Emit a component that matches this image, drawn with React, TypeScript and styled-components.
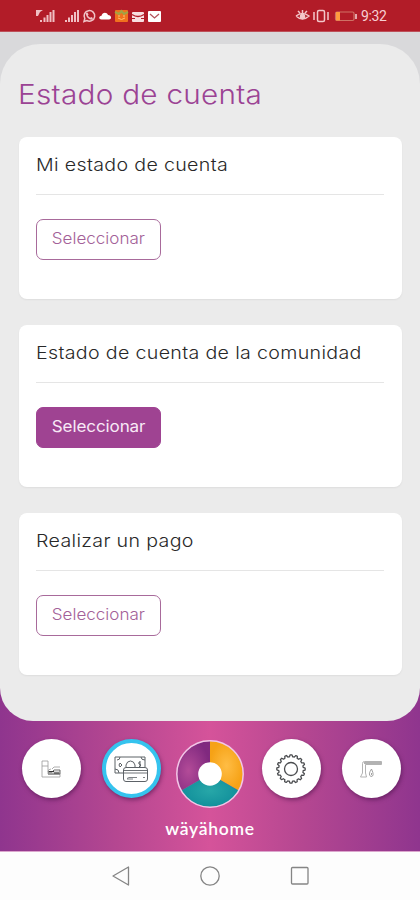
import React from "react";
import styled, { createGlobalStyle } from "styled-components";

const Global = createGlobalStyle`
  * { box-sizing: border-box; }
  body { margin: 0; background: #fdfdfd; font-family: Inter, "Open Sans", sans-serif; }
`;

const Screen = styled.div`
  width: 420px;
  height: 900px;
  display: flex;
  flex-direction: column;
  overflow: hidden;
`;

const StatusBar = styled.header`
  height: 32px;
  flex: none;
  display: flex;
  justify-content: space-between;
  background: #b21c28;
  border-bottom: 1px solid #bd5059;
  color: #f6d3d5;
`;

const Clock = styled.span`
  font: 400 14px/32px Roboto, sans-serif;
  letter-spacing: -0.4px;
  width: 59px;
  color: #f7cfd2;
`;

const StatusRight = styled.div`
  display: flex;
`;

const Stage = styled.main`
  height: 689px;
  flex: none;
  padding-top: 12px;
  background: linear-gradient(#d9d9db 0 300px, transparent 300px),
    linear-gradient(90deg, #8f358e 0%, #b54791 28%, #d5539a 50%, #b54791 72%, #8f358e 100%);
`;

const Panel = styled.section`
  height: 677px;
  padding: 34px 18px 0 19px;
  border-radius: 40px 40px 33px 33px;
  background: #ebebeb;
`;

const WideText = styled.span<{ $scale: number; $origin?: string }>`
  display: inline-block;
  transform: scaleX(${(p) => p.$scale});
  transform-origin: ${(p) => p.$origin ?? "left"};
`;

const Title = styled.h1`
  margin: 0 0 25px -1px;
  font-size: 27px;
  line-height: 34px;
  font-weight: 300;
  letter-spacing: 0.25px;
  white-space: nowrap;
  color: #9b4394;
`;

const CardList = styled.div`
  display: flex;
  flex-direction: column;
  gap: 26px;
`;

const Card = styled.article`
  height: 162px;
  padding: 15px 18px 0 17px;
  border-radius: 8px;
  background: #fff;
  box-shadow: 0 1px 2px rgba(0, 0, 0, 0.06);
`;

const CardTitle = styled.h2`
  margin: 0 0 24px;
  padding: 0 0 17px;
  border-bottom: 1px solid #e5e5e5;
  font-size: 17.5px;
  line-height: 25px;
  font-weight: 300;
  letter-spacing: 0.3px;
  white-space: nowrap;
  color: #282828;
`;

const SelectButton = styled.button<{ $filled?: boolean }>`
  display: block;
  width: 125px;
  height: 41px;
  padding: 0 0 2px;
  border: 1px solid ${(p) => (p.$filled ? "#9f4392" : "#a86a9b")};
  border-radius: 7px;
  background: ${(p) => (p.$filled ? "#9f4392" : "#fff")};
  color: ${(p) => (p.$filled ? "#f8e9f6" : "#a36198")};
  font: ${(p) => (p.$filled ? 400 : 300)} 15.5px Inter, sans-serif;
  letter-spacing: ${(p) => (p.$filled ? -0.1 : 0)}px;
`;

const BottomNav = styled.nav`
  height: 131px;
  flex: none;
  display: flex;
  flex-direction: column;
  align-items: center;
  padding-top: 18px;
  border-bottom: 1px solid #dba6cd;
  background: linear-gradient(90deg, #8f358e 0%, #b54791 28%, #d5539a 50%, #b54791 72%, #8f358e 100%);
`;

const NavRow = styled.div`
  height: 78px;
  display: grid;
  grid-template-columns: repeat(5, 80px);
  justify-items: center;
  align-items: start;
`;

const NavButton = styled.button<{ $active?: boolean }>`
  width: 59px;
  height: 59px;
  margin-left: 2px;
  padding: 0;
  border: ${(p) => (p.$active ? "4px solid #35c3ee" : "0")};
  border-radius: 50%;
  background: #fff;
  box-shadow: 1px 2px 4px rgba(70, 15, 70, 0.55);
  display: grid;
  place-items: center;
`;

const HomeButton = styled.button`
  padding: 0;
  border: 0;
  background: none;
  line-height: 0;
`;

const Brand = styled.div`
  font: 600 17.5px/24px Lato, sans-serif;
  letter-spacing: 0.7px;
  color: #fff;
`;

const SystemBar = styled.footer`
  height: 48px;
  display: grid;
  grid-template-columns: repeat(3, 90px);
  justify-content: center;
  justify-items: center;
  align-items: center;
  background: #fdfdfd;
`;

const LeftStatus = () => (
  <svg width="170" height="31" fill="#f0bfc3">
    <path d="M36 10h7l-3 2-2 4h-2z" />
    <path d="M40 20h2v2h-2zM43.5 17.500h2v4.500h-2zM46.500 15h2v7h-2zM49.500 12h2v10h-2zM52.500 10h2v12h-2z" />
    <path d="M65 20h2v2h-2zM68 17.500h2v4.500h-2zM71 15h2v7h-2zM74 12h2v10h-2zM77 10h2v12h-2z" />
    <path d="M84 21.500l.8-3a5.300 5.300 0 1 1 2 2z" fill="none" stroke="#f0c4c7" strokeWidth="1.500" />
    <path d="M86 13l1.500-.5 1 2-.7 1c.7 1.200 1.300 1.700 2.400 2.200l1-.7 1.700 1-.5 1.500c-3.300 1-7-3-6.400-6.500z" />
    <path d="M101.500 19.500c-3 0-3-3.500 0-3.700.8-3.800 5.400-3.900 6.500-.8 3.800.3 4 4.500 1 4.500z" fill="#fff" />
    <rect x="115" y="10" width="13" height="12" rx="1" fill="#f0711e" />
    <path d="M115 12l4 2 2.500-3 2.500 3 4-2" fill="none" stroke="#a2a344" strokeWidth="2" />
    <path d="M118 18q3.500 3 7 0M118 16h2m3 0h2" fill="none" stroke="#ffc36f" />
    <rect x="132" y="12" width="12" height="10" rx="1" fill="#f8dfe1" />
    <path d="M132 14.500q6 4 12 0" fill="none" stroke="#b21c28" strokeWidth="1.400" />
    <path d="M132 18.500h3m6 0h3" fill="none" stroke="#b21c28" />
    <rect x="148" y="11" width="13" height="11" rx="1" fill="#fff" />
    <path d="M150 14l4.500 4 4.500-4" fill="none" stroke="#b4535c" strokeWidth="1.300" />
  </svg>
);

const RightIcons = () => (
  <svg width="66" height="31" fill="none" stroke="#f3c7ca" strokeWidth="1.500">
    <path d="M1 16q6.500-5 13 0-6.500 6-13 0M3 11l2 2m2.500-3v3m4.500-2l-2 2" />
    <circle cx="7.500" cy="16.500" r="2" fill="#f3c7ca" />
    <rect x="22.500" y="10.500" width="7" height="11" rx="1.500" />
    <path d="M19 12v8m14-8v8" />
    <rect x="40.500" y="12" width="18.500" height="8.500" rx="1.500" stroke="#cf7165" strokeWidth="1.200" />
    <path d="M41 12h4v8.500h-4z" fill="#ff9b3e" stroke="none" />
    <path d="M61 14v5" stroke="#f5d6d8" />
  </svg>
);

const AmenitiesIcon = () => (
  <svg width="24" height="24" viewBox="0 0 24 24" fill="none" stroke="#999" strokeWidth=".8">
    <path d="M3 4h6v5H3zM3 9v11h18v-3H9V9M12 12q-3 0-3 3h12M13 12l2-2h6" />
    <path d="M9 15h4l2-2h6v4H9" stroke="#444" />
    <path d="M10 14.500h5M15 16h5" stroke="#333" strokeWidth="1.200" />
  </svg>
);

const PaymentIcon = () => (
  <svg width="36" height="32" viewBox="0 0 36 32" fill="none" stroke="#5d6267" strokeWidth="1">
    <path d="M10 20H2V4h30v10M4 7q3 0 3-3M28 4q0 3 4 3M2 16q4 0 4 4" />
    <path d="M13 14v-2q1-4 4.500-4t4.500 4v2M7 10l2 2-2 2-1-2zM27 9q-2 0-1 2l2 1-2 2m1-6v6" />
    <rect x="10.500" y="14.500" width="24" height="14" rx="2.500" fill="#fff" />
    <path d="M10.500 17.500h24M10.500 20h24" strokeWidth=".9" />
    <path d="M14 25.500l2-1h8m-10 1.500h6M30 24.500h2" strokeWidth=".8" />
  </svg>
);

const Wheel = () => (
  <svg width="70" height="70" viewBox="-35 -35 70 70">
    <defs>
      <radialGradient id="plum" cx="35%" cy="60%" r="65%">
        <stop stopColor="#b34b98" /><stop offset="1" stopColor="#80297f" />
      </radialGradient>
      <radialGradient id="amber"><stop stopColor="#ffbd45" /><stop offset="1" stopColor="#f6a216" /></radialGradient>
      <radialGradient id="teal"><stop stopColor="#27a7a8" /><stop offset="1" stopColor="#12909b" /></radialGradient>
    </defs>
    <path d="M0 0V-33A33 33 0 0 0-28.580 16.500z" fill="url(#plum)" />
    <path d="M0 0V-33A33 33 0 0 1 28.580 16.500z" fill="url(#amber)" />
    <path d="M0 0L28.580 16.500A33 33 0 0 1-28.580 16.500z" fill="url(#teal)" />
    <circle r="33.200" fill="none" stroke="#f2c6e7" strokeWidth="1.500" />
    <circle r="11.800" fill="#fff" />
  </svg>
);

const gearPath = Array.from({ length: 96 }, (_, i) => {
  const angle = (i / 96) * Math.PI * 2 - Math.PI / 2 - 0.06;
  const radius = i % 6 < 3 ? 14.2 : 12.3;
  return `${i ? "L" : "M"}${(16 + radius * Math.cos(angle)).toFixed(2)} ${(16 + radius * Math.sin(angle)).toFixed(2)}`;
}).join("") + "Z";

const GearIcon = () => (
  <svg width="32" height="32" fill="none" stroke="#4a4c4f" strokeWidth="1.300">
    <path d={gearPath} strokeLinejoin="round" />
    <circle cx="16" cy="16" r="6.500" />
  </svg>
);

const TapIcon = () => (
  <svg width="24" height="22" fill="none" stroke="#aaa" strokeWidth=".9">
    <path d="M3.500 15V5.500q0-2 2-2h17v3H6.500V15" />
    <path d="M5 5h17" strokeWidth="1.800" />
    <path d="M3.500 15l-2 4h6l-1-4" />
    <path d="M12.500 11q-4 6-.5 7.500 4 0 .5-7.500M12.500 15v2" stroke="#999" />
  </svg>
);

const SystemIcon = ({ kind }: { kind: "back" | "home" | "recent" }) => (
  <svg width="22" height="22" fill="none" stroke="#858585" strokeWidth="1.300">
    {kind === "back" && <path d="M19.500 2v18L4 11z" strokeLinejoin="round" />}
    {kind === "home" && <circle cx="11" cy="11" r="9.200" />}
    {kind === "recent" && <rect x="2.500" y="2.500" width="16.500" height="16.500" rx="1" />}
  </svg>
);

const cards = [
  { title: "Mi estado de cuenta", filled: false },
  { title: "Estado de cuenta de la comunidad", filled: true },
  { title: "Realizar un pago", filled: false },
];

export default function App() {
  return (
    <>
      <Global />
      <Screen>
        <StatusBar>
          <LeftStatus />
          <StatusRight><RightIcons /><Clock>9:32</Clock></StatusRight>
        </StatusBar>
        <Stage>
          <Panel>
            <Title><WideText $scale={1.1}>Estado de cuenta</WideText></Title>
            <CardList>
              {cards.map((card) => (
                <Card key={card.title}>
                  <CardTitle><WideText $scale={1.12}>{card.title}</WideText></CardTitle>
                  <SelectButton $filled={card.filled}>
                    <WideText $scale={1.1} $origin="center">Seleccionar</WideText>
                  </SelectButton>
                </Card>
              ))}
            </CardList>
          </Panel>
        </Stage>
        <BottomNav>
          <NavRow>
            <NavButton aria-label="Amenidades"><AmenitiesIcon /></NavButton>
            <NavButton $active aria-label="Pagos"><PaymentIcon /></NavButton>
            <HomeButton aria-label="Inicio"><Wheel /></HomeButton>
            <NavButton aria-label="Ajustes"><GearIcon /></NavButton>
            <NavButton aria-label="Agua"><TapIcon /></NavButton>
          </NavRow>
          <Brand>wäyähome</Brand>
        </BottomNav>
        <SystemBar>
          <SystemIcon kind="back" />
          <SystemIcon kind="home" />
          <SystemIcon kind="recent" />
        </SystemBar>
      </Screen>
    </>
  );
}
